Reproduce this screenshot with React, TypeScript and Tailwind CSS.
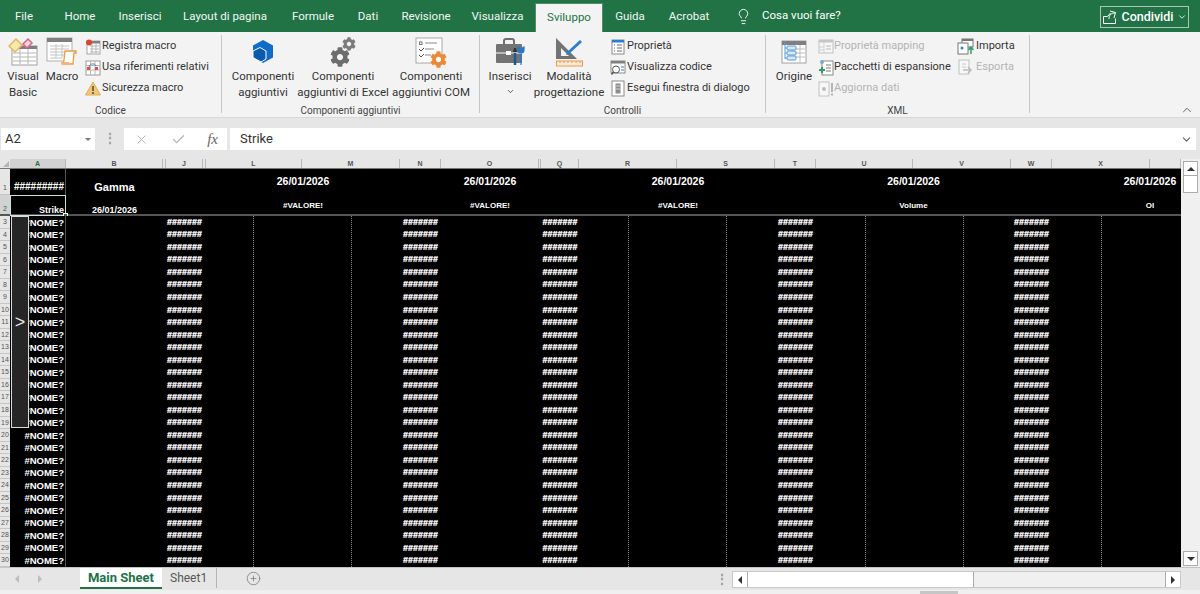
import { Check, ChevronDown, ChevronUp, CirclePlus, Lightbulb, X } from "lucide-react";
import type { ReactNode } from "react";
import { FaCog } from "react-icons/fa";

const rowNumbers = Array.from({ length: 28 }, (_, i) => i + 3);

const columns = [
  { label: "A", w: "w-[56px]", on: true },
  { label: "B", w: "w-[97px]" },
  { label: "", w: "w-[3px]" },
  { label: "J", w: "w-[37px]" },
  { label: "", w: "w-[3px]" },
  { label: "L", w: "w-[96px]" },
  { label: "M", w: "w-[98px]" },
  { label: "N", w: "w-[41px]" },
  { label: "O", w: "w-[98px]" },
  { label: "", w: "w-[2px]" },
  { label: "Q", w: "w-[38px]" },
  { label: "R", w: "w-[98px]" },
  { label: "S", w: "w-[98px]" },
  { label: "T", w: "w-[41px]" },
  { label: "U", w: "w-[97px]" },
  { label: "V", w: "w-[98px]" },
  { label: "W", w: "w-[41px]" },
  { label: "X", w: "w-[98px]" },
  { label: "", w: "w-[31px]" },
];

const tabs = [
  { label: "File", w: "w-[48px]" },
  { label: "Home", w: "w-[64px]" },
  { label: "Inserisci", w: "w-[56px]" },
  { label: "Layout di pagina", w: "w-[114px]" },
  { label: "Formule", w: "w-[62px]" },
  { label: "Dati", w: "w-[48px]" },
  { label: "Revisione", w: "w-[68px]" },
  { label: "Visualizza", w: "w-[75px]" },
  { label: "Sviluppo", w: "w-[68px]", active: true },
  { label: "Guida", w: "w-[54px]" },
  { label: "Acrobat", w: "w-[64px]" },
];

function VisualBasicIcon() {
  return (
    <svg width="30" height="28" viewBox="0 0 30 28">
      <rect x="4" y="8" width="25" height="19" fill="#fff" stroke="#a0a0a0" />
      <rect x="4" y="8" width="25" height="3" fill="#7f7f7f" />
      <path d="M5 15h23M5 19h23M5 23h23M12 11v15M20 11v15" stroke="#b5b5b5" />
      <path d="M8 1l6 6-7 7-6-6z" fill="#fbe6ae" stroke="#e3b862" strokeWidth="1.5" />
      <path d="M20 1l4 4-5 5-4-4z" fill="#fbd3de" stroke="#d9668a" strokeWidth="1.5" />
    </svg>
  );
}

function MacroIcon() {
  return (
    <svg width="32" height="30" viewBox="0 0 32 30">
      <rect x="1" y="1" width="25" height="23" fill="#fff" stroke="#b0b0b0" />
      <rect x="1" y="1" width="25" height="4" fill="#7f7f7f" />
      <path d="M4 9h19M4 12h19M4 15h19M4 18h14M4 21h12M10 7v14M16 7v14" stroke="#c4c4c4" />
      <path d="M19 14h11v2h-2l-1 11h-10c1-2 1-3 1-4z" fill="#fff" stroke="#ea9a4a" strokeWidth="1.3" />
      <path d="M15 25h8c0 2 1 3 2 3H16c-1 0-1-2-1-3z" fill="#f3b37a" />
    </svg>
  );
}

function RecordIcon() {
  return (
    <svg width="16" height="16" viewBox="0 0 16 16">
      <rect x="2" y="2" width="13" height="13" fill="#fff" stroke="#a5a5a5" />
      <rect x="2" y="2" width="13" height="2.5" fill="#7f7f7f" />
      <path d="M5 7h9M5 10h9M5 13h9M7 5v9M11 5v9" stroke="#b5b5b5" />
      <circle cx="4" cy="3.5" r="3" fill="#d9452b" />
    </svg>
  );
}

function RelativeIcon() {
  return (
    <svg width="16" height="16" viewBox="0 0 16 16">
      <rect x="1" y="1" width="14" height="14" fill="#fff" stroke="#9a9a9a" />
      <path d="M1 5.5h14M1 10h14M5.5 1v14M10 1v14" stroke="#b8b8b8" />
      <path d="M4 7c1-4 6-4 7-1" fill="none" stroke="#3e7fc4" />
      <rect x="2" y="7" width="3" height="3" fill="#e0533c" />
      <rect x="10" y="7" width="3" height="3" fill="#e0533c" />
    </svg>
  );
}

function WarningIcon() {
  return (
    <svg width="16" height="15" viewBox="0 0 16 15">
      <path d="M8 1l7.5 13H.5z" fill="#f2c774" stroke="#dfae5c" />
      <path d="M8 5v5M8 11v2" stroke="#4a4a4a" strokeWidth="1.5" />
    </svg>
  );
}

function AddInIcon() {
  return (
    <svg width="22" height="24" viewBox="0 0 22 24">
      <path d="M11 0l10 5.5v12L11 23 1 17.5v-12z" fill="#0f6cc8" />
      <path d="M1 11l7-3.5 6 3.5v8l-5 3-8-4.500z" fill="#0b5bb0" stroke="#fff" strokeWidth="1" />
    </svg>
  );
}

function GearsIcon() {
  return (
    <div className="relative w-[26px] h-[30px]">
      <FaCog className="absolute left-0 bottom-0 text-[#6d6d6d]" size={20} />
      <FaCog className="absolute right-0 top-0 text-[#7c7c7c]" size={14} />
    </div>
  );
}

function ComIcon() {
  return (
    <div className="relative w-[32px] h-[31px]">
      <svg width="28" height="27" viewBox="0 0 28 27" className="absolute left-0 top-0">
        <rect x="1" y="1" width="26" height="25" fill="#fff" stroke="#a8a8a8" />
        <rect x="4.500" y="5" width="2.500" height="2.500" fill="none" stroke="#777" />
        <path d="M10 6h12M10 12h9M10 18h6" stroke="#8a8a8a" />
        <path d="M4 12l2 2 3-3M4 18l2 2 3-3" fill="none" stroke="#555" />
      </svg>
      <FaCog className="absolute right-0 bottom-0 text-[#ed8936]" size={17} />
    </div>
  );
}

function BriefcaseIcon() {
  return (
    <svg width="30" height="28" viewBox="0 0 30 28">
      <path d="M9 6V3c0-1 1-2 2-2h6c1 0 2 1 2 2v3" fill="none" stroke="#6f6f6f" strokeWidth="2" />
      <rect x="1" y="6" width="26" height="19" rx="1" fill="#737373" />
      <path d="M1 15h26" stroke="#fff" />
      <rect x="11" y="13" width="5" height="4" fill="#fff" />
      <path d="M20 27V15" stroke="#155a9c" strokeWidth="2.500" />
      <path d="M18 14l1-4h2l1 4z" fill="#333" />
      <path d="M26 27V16M23 9v3c0 2 1 3 3 3s3-1 3-3V9l-2 1v2h-2v-2z" fill="#2878c8" stroke="#2878c8" strokeWidth="1.200" />
    </svg>
  );
}

function DesignIcon() {
  return (
    <svg width="30" height="30" viewBox="0 0 30 30">
      <path d="M2 1l21 21H2zM7 11v8h8z" fill="#737373" fillRule="evenodd" />
      <path d="M13 15L26 3l2 2-13 12-3 1z" fill="#2b7cd3" />
      <rect x="2.500" y="24" width="26" height="5" fill="#fbead7" stroke="#ee9a4d" />
      <path d="M6 24v2M10 24v2M14 24v2M18 24v2M22 24v2M26 24v2" stroke="#ee9a4d" />
    </svg>
  );
}

function PropertyIcon() {
  return (
    <svg width="15" height="16" viewBox="0 0 15 16">
      <rect x="1" y="1" width="12" height="14" fill="#fff" stroke="#8a8a8a" />
      <rect x="1" y="1" width="12" height="2.500" fill="#2b7cd3" />
      <path d="M3 6h1M6 6h5M3 9h1M6 9h5M3 12h1M6 12h5" stroke="#666" />
    </svg>
  );
}

function CodeViewIcon() {
  return (
    <svg width="17" height="16" viewBox="0 0 17 16">
      <rect x="1" y="1" width="14" height="12" fill="#fff" stroke="#8a8a8a" />
      <rect x="1" y="1" width="14" height="2.500" fill="#7f7f7f" />
      <circle cx="6" cy="9.500" r="3.500" fill="#fff" stroke="#555" />
      <path d="M3.500 12l-2 2.500" stroke="#555" strokeWidth="1.500" />
      <path d="M11 7h3M11 10h3" stroke="#2b7cd3" />
    </svg>
  );
}

function DialogIcon() {
  return (
    <svg width="15" height="17" viewBox="0 0 15 17">
      <rect x="1" y="1" width="12" height="15" fill="#fff" stroke="#8a8a8a" />
      <rect x="4.500" y="3.500" width="5" height="10" fill="#8c8c8c" />
      <path d="M5 6h4M5 9h4" stroke="#d0d0d0" />
    </svg>
  );
}

function SourceIcon() {
  return (
    <svg width="26" height="24" viewBox="0 0 26 24">
      <rect x="1" y="1" width="24" height="22" fill="#fff" stroke="#a0a0a0" />
      <rect x="1" y="1" width="24" height="4" fill="#7f7f7f" />
      <path d="M15 9h9M15 13h9M15 17h9M19 5v17" stroke="#bdbdbd" />
      <path d="M4 1v18M4 8h2M4 13h2M4 18h2" stroke="#5b9bd5" fill="none" />
      <rect x="6" y="6" width="9" height="4" rx="1" fill="#d7e8f7" stroke="#5b9bd5" />
      <rect x="6" y="11" width="9" height="4" rx="1" fill="#d7e8f7" stroke="#5b9bd5" />
      <rect x="6" y="16" width="9" height="4" rx="1" fill="#d7e8f7" stroke="#5b9bd5" />
    </svg>
  );
}

function MappingIcon() {
  return (
    <svg width="16" height="15" viewBox="0 0 16 15">
      <rect x="1" y="1" width="14" height="13" fill="#f7f7f7" stroke="#c2c2c2" />
      <rect x="1" y="1" width="14" height="2.500" fill="#c6c6c6" />
      <path d="M6 3.500V14M1 8h5M1 11h5" stroke="#cfcfcf" />
      <path d="M8 7h5M8 10h5" stroke="#b9b9b9" />
    </svg>
  );
}

function PackIcon() {
  return (
    <svg width="16" height="17" viewBox="0 0 16 17">
      <rect x="4" y="2" width="11" height="14" fill="#fff" stroke="#8a8a8a" />
      <path d="M8 6h5M8 9h5M8 12h5" stroke="#777" />
      <circle cx="4" cy="3" r="2" fill="#7ba9d9" />
      <path d="M4 8v6M1 11h6" stroke="#2f9e6e" strokeWidth="2" />
    </svg>
  );
}

function RefreshIcon() {
  return (
    <svg width="16" height="16" viewBox="0 0 16 16">
      <rect x="1" y="1" width="10" height="14" fill="#f7f7f7" stroke="#c2c2c2" />
      <circle cx="6" cy="8" r="2" fill="#bcbcbc" />
      <path d="M14 2v9M14 12.500v2" stroke="#b5b5b5" strokeWidth="2" />
    </svg>
  );
}

function ImportIcon() {
  return (
    <svg width="17" height="17" viewBox="0 0 17 17">
      <rect x="5" y="1" width="11" height="8" fill="#fff" stroke="#777" />
      <rect x="5" y="1" width="11" height="2" fill="#777" />
      <rect x="1" y="5" width="10" height="11" fill="#fff" stroke="#777" />
      <circle cx="5" cy="10" r="1.500" fill="#3e7fc4" />
      <path d="M14 16v-6M11.500 12l2.500-3 2.500 3" fill="none" stroke="#2f9e6e" strokeWidth="1.500" />
    </svg>
  );
}

function ExportIcon() {
  return (
    <svg width="17" height="17" viewBox="0 0 17 17">
      <rect x="2" y="1" width="10" height="14" fill="#f7f7f7" stroke="#c2c2c2" />
      <path d="M5 5h4M5 8h4" stroke="#cacaca" />
      <path d="M6 11h8M11 8l3 3-3 3" fill="none" stroke="#bcbcbc" strokeWidth="1.500" />
    </svg>
  );
}

function ShareIcon() {
  return (
    <svg width="16" height="15" viewBox="0 0 16 15" fill="none" stroke="#fff">
      <path d="M1.500 6.500v7h12v-5" />
      <path d="M1.500 6.500h4l3-3.500M8 1l5.500 1.500-1.500 5.500" />
      <path d="M13 3c-4 0-6 2-6 6" />
    </svg>
  );
}

function BigTool(props: { icon: ReactNode; lines: string[]; w: string; extra?: ReactNode }) {
  return (
    <div className={`${props.w} flex flex-col items-center shrink-0`}>
      <div className="h-[32px] flex items-center justify-center">{props.icon}</div>
      {props.lines.map((line) => (
        <span key={line} className="leading-[16px] whitespace-nowrap">
          {line}
        </span>
      ))}
      {props.extra}
    </div>
  );
}

function SmallTool(props: { icon: ReactNode; label: string; off?: boolean; iconW: string }) {
  return (
    <div className={`h-[21px] flex items-center whitespace-nowrap text-[11px] ${props.off ? "text-[#b4b4b4]" : ""}`}>
      <div className={`${props.iconW} flex justify-center shrink-0`}>{props.icon}</div>
      <span>{props.label}</span>
    </div>
  );
}

function Group(props: { w: string; label: string; pad?: string; children: ReactNode }) {
  return (
    <>
      <div className={`${props.w} shrink-0 flex flex-col pt-[4px]`}>
        <div className={`flex-1 flex ${props.pad ?? ""}`}>{props.children}</div>
        <div className="h-[12px] leading-[12px] text-center text-[10px] text-[#444]">{props.label}</div>
      </div>
      <div className="w-px my-[3px] mb-[4px] bg-[#c6c6c6] shrink-0" />
    </>
  );
}

function HashColumn() {
  return (
    <div className="w-full h-full grid grid-rows-[repeat(28,minmax(0,1fr))] justify-items-center items-center text-[9px] font-bold text-white [text-shadow:0_0_1px_#fff]">
      {rowNumbers.map((n) => (
        <span key={n} className="leading-none">#######</span>
      ))}
    </div>
  );
}

function HeadCol(props: { w: string; date: string; label: string }) {
  return (
    <div className={`${props.w} shrink-0 grid grid-rows-[26px_19px] text-white font-bold text-center`}>
      <span className="text-[10.5px] self-center">{props.date}</span>
      <span className="text-[8px] self-center pt-[2px]">{props.label}</span>
    </div>
  );
}

export default function App() {
  return (
    <div className="w-[1200px] h-[594px] overflow-hidden flex flex-col bg-[#e6e6e6] font-['Roboto',sans-serif] text-[11.5px] text-[#333]">
      {/* title bar with tabs */}
      <div className="h-[32px] bg-[#217346] flex items-end shrink-0 text-[11.5px] text-white relative">
        {tabs.map((t) => (
          <div
            key={t.label}
            className={`${t.w} text-center shrink-0 ${t.active ? "h-[29px] leading-[26px] bg-[#f3f3f3] text-[#217346] border-t border-x border-[#4d9069]" : "h-[32px] leading-[33px] text-[#f1f7f3]"}`}
          >
            {t.label}
          </div>
        ))}
        <div className="h-[32px] flex items-center pl-[14px] gap-[10px]">
          <Lightbulb size={17} strokeWidth={1.3} />
          <span>Cosa vuoi fare?</span>
        </div>
        <div className="ml-auto mr-[11px] mb-[4px] w-[89px] h-[22px] border border-[#a6c7b5] flex items-center justify-center gap-[3px] font-medium text-[12.5px]">
          <ShareIcon />
          <span>Condividi</span>
          <ChevronDown size={10} />
        </div>
      </div>

      {/* ribbon */}
      <div className="h-[85px] bg-[#f3f3f3] flex shrink-0 relative">
        <Group w="w-[221px]" label="Codice">
          <BigTool w="w-[46px]" icon={<VisualBasicIcon />} lines={["Visual", "Basic"]} />
          <BigTool w="w-[32px]" icon={<MacroIcon />} lines={["Macro"]} />
          <div className="ml-[6px]">
            <SmallTool iconW="w-[18px]" icon={<RecordIcon />} label="Registra macro" />
            <SmallTool iconW="w-[18px]" icon={<RelativeIcon />} label="Usa riferimenti relativi" />
            <SmallTool iconW="w-[18px]" icon={<WarningIcon />} label="Sicurezza macro" />
          </div>
        </Group>
        <Group w="w-[257px]" label="Componenti aggiuntivi" pad="pl-[10px] gap-[5px]">
          <BigTool w="w-[62px]" icon={<AddInIcon />} lines={["Componenti", "aggiuntivi"]} />
          <BigTool w="w-[88px]" icon={<GearsIcon />} lines={["Componenti", "aggiuntivi di Excel"]} />
          <BigTool w="w-[78px]" icon={<ComIcon />} lines={["Componenti", "aggiuntivi COM"]} />
        </Group>
        <Group w="w-[285px]" label="Controlli" pad="pl-[10px]">
          <BigTool
            w="w-[40px]"
            icon={<BriefcaseIcon />}
            lines={["Inserisci"]}
            extra={<ChevronDown size={9} className="mt-[3px]" />}
          />
          <BigTool w="w-[70px] ml-[4px]" icon={<DesignIcon />} lines={["Modalità", "progettazione"]} />
          <div className="ml-[5px]">
            <SmallTool iconW="w-[18px]" icon={<PropertyIcon />} label="Proprietà" />
            <SmallTool iconW="w-[18px]" icon={<CodeViewIcon />} label="Visualizza codice" />
            <SmallTool iconW="w-[18px]" icon={<DialogIcon />} label="Esegui finestra di dialogo" />
          </div>
        </Group>
        <Group w="w-[263px]" label="XML" pad="pl-[9px]">
          <BigTool w="w-[38px]" icon={<SourceIcon />} lines={["Origine"]} />
          <div className="ml-[4px] w-[137px] shrink-0">
            <SmallTool off iconW="w-[17px]" icon={<MappingIcon />} label="Proprietà mapping" />
            <SmallTool iconW="w-[17px]" icon={<PackIcon />} label="Pacchetti di espansione" />
            <SmallTool off iconW="w-[17px]" icon={<RefreshIcon />} label="Aggiorna dati" />
          </div>
          <div>
            <SmallTool iconW="w-[22px]" icon={<ImportIcon />} label="Importa" />
            <SmallTool off iconW="w-[22px]" icon={<ExportIcon />} label="Esporta" />
          </div>
        </Group>
        <ChevronUp size={14} strokeWidth={1.5} className="absolute right-[6px] bottom-[0px] text-[#555]" />
      </div>

      {/* formula bar */}
      <div className="h-[42px] shrink-0 border-t border-[#d8d8d8] flex pt-[10px] pl-[1px] pr-[4px]">
        <div className="w-[94px] h-[22px] bg-white flex items-center justify-between px-[4px] text-[13px]">
          <span>A2</span>
          <span className="w-0 h-0 border-x-[3px] border-x-transparent border-t-[3px] border-t-[#777]" />
        </div>
        <div className="w-[29px] h-[22px] text-center text-[#999] leading-[20px] font-bold">⋮</div>
        <div className="w-[103px] h-[22px] bg-white flex items-center justify-between pl-[10px] pr-[9px] text-[#aaa]">
          <X size={15} strokeWidth={1.3} />
          <Check size={15} strokeWidth={2} className="text-[#b5b5b5]" />
          <span className="font-['Liberation_Serif',serif] italic text-[15px] text-[#666]">fx</span>
        </div>
        <div className="ml-[3px] flex-1 h-[22px] bg-white flex items-center justify-between pl-[10px] pr-[3px] text-[13px]">
          <span>Strike</span>
          <ChevronDown size={13} className="text-[#666]" />
        </div>
      </div>

      {/* sheet */}
      <div className="h-[408px] shrink-0 flex font-['Liberation_Sans',sans-serif] overflow-hidden">
        <div className="w-[1181px] shrink-0 flex flex-col">
          {/* column letters */}
          <div className="h-[9px] flex shrink-0">
            <div className="w-[10px] shrink-0 relative">
              <span className="absolute right-[1px] bottom-[1px] w-0 h-0 border-l-[6px] border-l-transparent border-b-[6px] border-b-[#b5b5b5]" />
            </div>
            {columns.map((c, i) => (
              <div
                key={i}
                className={`${c.w} shrink-0 border-r border-[#b8b8b8] text-center text-[7px] leading-[9px] font-bold ${c.on ? "bg-[#d2d2d2] text-[#217346]" : "text-[#555]"}`}
              >
                {c.label}
              </div>
            ))}
          </div>

          {/* frozen header rows */}
          <div className="h-[48px] flex shrink-0 border-t border-b-2 border-t-[#777] border-b-[#555] relative">
            <div className="w-[10px] shrink-0 grid grid-rows-[26px_19px] text-[7px] text-[#555] text-center">
              <span className="self-stretch flex items-end justify-center pb-[1px] border-b border-[#c6c6c6]">1</span>
              <span className="self-stretch flex items-end justify-center bg-[#d2d2d2] text-[#217346]">2</span>
            </div>
            <div className="w-[56px] shrink-0 bg-black border-r border-[#555] grid grid-rows-[26px_19px] text-white font-bold text-right pr-[1px]">
              <span className="text-[10px] self-end pb-[1px]">#########</span>
              <span className="text-[9px] self-end leading-[7px]">Strike</span>
            </div>
            <div className="flex-1 flex bg-black">
              <div className="w-[97px] shrink-0 grid grid-rows-[26px_19px] text-white font-bold text-center">
                <span className="text-[11px] self-end leading-[14px] pb-[1px]">Gamma</span>
                <span className="text-[9px] self-end leading-[8px]">26/01/2026</span>
              </div>
              <div className="w-[43px] shrink-0" />
              <HeadCol w="w-[194px]" date="26/01/2026" label="#VALORE!" />
              <div className="w-[41px] shrink-0" />
              <HeadCol w="w-[98px]" date="26/01/2026" label="#VALORE!" />
              <div className="w-[40px] shrink-0" />
              <HeadCol w="w-[198px]" date="26/01/2026" label="#VALORE!" />
              <div className="w-[39px] shrink-0" />
              <HeadCol w="w-[195px]" date="26/01/2026" label="Volume" />
              <div className="w-[108px] shrink-0" />
              <HeadCol w="w-[62px]" date="26/01/2026" label="OI" />
            </div>
            {/* selected cell */}
            <div className="absolute left-[10px] top-[26px] w-[56px] h-[21px] border border-[#cfe0d6]">
              <span className="absolute right-[-3px] bottom-[-3px] w-[5px] h-[5px] bg-[#217346] border border-white" />
            </div>
          </div>

          {/* data rows */}
          <div className="h-[351px] flex relative">
            <div className="w-[10px] shrink-0 grid grid-rows-[repeat(28,minmax(0,1fr))] text-[7px] text-[#555] text-center">
              {rowNumbers.map((n) => (
                <span key={n} className="border-b border-[#c6c6c6] leading-[12px] overflow-hidden">{n}</span>
              ))}
            </div>
            <div className="w-[56px] shrink-0 bg-black border-r border-[#555] grid grid-rows-[repeat(28,minmax(0,1fr))] items-center text-right pr-[1px] text-[9.5px] font-bold text-white">
              {rowNumbers.map((n) => (
                <span key={n} className="leading-none">#NOME?</span>
              ))}
            </div>
            <div className="flex-1 flex bg-black">
              <div className="w-[100px] shrink-0" />
              <div className="w-[37px] shrink-0"><HashColumn /></div>
              <div className="w-[50px] shrink-0" />
              <div className="w-[98px] shrink-0 border-l border-dotted border-[#8a8a8a]" />
              <div className="w-[49px] shrink-0 border-l border-dotted border-[#8a8a8a]" />
              <div className="w-[41px] shrink-0"><HashColumn /></div>
              <div className="w-[100px] shrink-0" />
              <div className="w-[38px] shrink-0"><HashColumn /></div>
              <div className="w-[49px] shrink-0" />
              <div className="w-[98px] shrink-0 border-l border-dotted border-[#8a8a8a]" />
              <div className="w-[49px] shrink-0 border-l border-dotted border-[#8a8a8a]" />
              <div className="w-[41px] shrink-0"><HashColumn /></div>
              <div className="w-[49px] shrink-0" />
              <div className="w-[98px] shrink-0 border-l border-dotted border-[#8a8a8a]" />
              <div className="w-[48px] shrink-0 border-l border-dotted border-[#8a8a8a]" />
              <div className="w-[41px] shrink-0"><HashColumn /></div>
              <div className="w-[49px] shrink-0" />
              <div className="w-[80px] shrink-0 border-l border-dotted border-[#8a8a8a]" />
            </div>
            <div className="absolute left-[11px] top-0 w-[18px] h-[212px] bg-[#262626] border border-[#dcdcdc] flex items-center justify-center text-[#e8e8e8] text-[18px] leading-none">
              &gt;
            </div>
          </div>
        </div>

        {/* vertical scrollbar */}
        <div className="flex-1 flex flex-col items-center bg-[#f0f0f0] pt-[2px]">
          <div className="w-[15px] h-[15px] bg-white border border-[#ababab] flex items-center justify-center">
            <span className="w-0 h-0 border-x-[4px] border-x-transparent border-b-[4px] border-b-[#333]" />
          </div>
          <div className="w-[15px] h-[17px] bg-white border border-[#ababab] border-t-0" />
          <div className="flex-1" />
          <div className="w-[15px] h-[15px] bg-white border border-[#ababab] flex items-center justify-center mb-[1px]">
            <span className="w-0 h-0 border-x-[4px] border-x-transparent border-t-[4px] border-t-[#333]" />
          </div>
        </div>
      </div>

      {/* sheet tabs and horizontal scrollbar */}
      <div className="h-[23px] shrink-0 border-t border-[#c4c4c4] flex items-start text-[#595959] relative">
        <div className="w-[80px] shrink-0 h-[22px] flex items-center pl-[15px] gap-[19px]">
          <span className="w-0 h-0 border-y-[4px] border-y-transparent border-r-[4px] border-r-[#bcbcbc]" />
          <span className="w-0 h-0 border-y-[4px] border-y-transparent border-l-[4px] border-l-[#bcbcbc]" />
        </div>
        <div className="w-[82px] h-[21px] bg-white border-b-2 border-[#217346] text-center text-[13px] font-bold leading-[20px] text-[#217346]">
          Main Sheet
        </div>
        <div className="w-[55px] h-[20px] text-center text-[12px] leading-[20px] border-r border-[#b5b5b5] pl-[8px] pr-[10px]">
          Sheet1
        </div>
        <CirclePlus size={15} strokeWidth={1.2} className="ml-[29px] mt-[3px] text-[#777]" />
        <div className="absolute left-[716px] top-[5px] text-[#999] text-[12px] leading-none font-bold">⋮</div>
        <div className="absolute left-[732px] top-[3px] w-[449px] h-[17px] flex bg-[#f0f0f0] border border-[#c8c8c8]">
          <div className="w-[15px] bg-white border-r border-[#ababab] flex items-center justify-center shrink-0">
            <span className="w-0 h-0 border-y-[4px] border-y-transparent border-r-[4px] border-r-[#333]" />
          </div>
          <div className="w-[226px] bg-white border-r border-[#ababab] shrink-0" />
          <div className="flex-1" />
          <div className="w-[15px] bg-white border-l border-[#ababab] flex items-center justify-center shrink-0">
            <span className="w-0 h-0 border-y-[4px] border-y-transparent border-l-[4px] border-l-[#333]" />
          </div>
        </div>
      </div>

      {/* status strip */}
      <div className="flex-1 bg-[#f0f0f0] pl-[920px] pt-[1px]">
        <div className="w-[38px] h-full bg-[#c6c6c6]" />
      </div>
    </div>
  );
}
